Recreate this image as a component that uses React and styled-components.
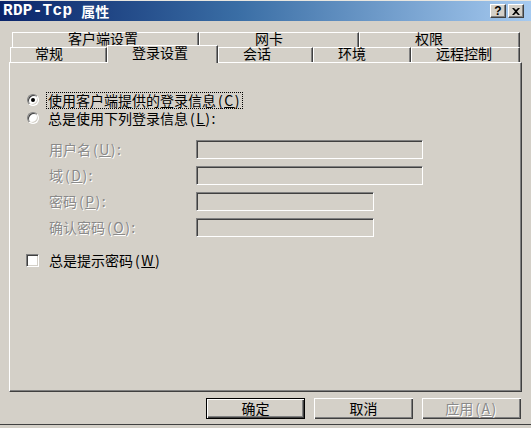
import React from 'react';
import styled, { createGlobalStyle } from 'styled-components';

const Global = createGlobalStyle`
  html, body { margin: 0; padding: 0; background: #d4d0c8; }
  body { font-family: "Noto Sans CJK SC", "Noto Sans", sans-serif; }
`;

const Window = styled.div`
  width: 531px;
  height: 425px;
  box-sizing: border-box;
  background: #d4d0c8;
  border-bottom: 1px solid #404040;
  display: flex;
  flex-direction: column;
  font-family: "Noto Sans CJK SC", "Noto Sans", sans-serif;
  font-size: 14px;
  color: #000;
`;

const TitleBar = styled.div`
  height: 20px;
  border-top: 1px solid #e8e6e0;
  background: linear-gradient(to right, #0a246a 0%, #3a6ea5 45%, #a6caf0 100%);
  display: flex;
  align-items: center;
  justify-content: space-between;
  padding: 0 7px 0 3px;
`;

const Title = styled.div`
  color: #fff;
  font-weight: bold;
  display: flex;
  align-items: center;
  gap: 9px;
`;

const TitleLatin = styled.span`
  font-family: "Liberation Mono", monospace;
  font-size: 16px;
  letter-spacing: 0.3px;
`;

const TitleCjk = styled.span`
  font-family: "Noto Sans CJK SC", sans-serif;
  font-size: 14px;
`;

const CaptionButtons = styled.div`
  display: flex;
  gap: 2px;
`;

const CaptionButton = styled.div`
  width: 16px;
  height: 14px;
  box-sizing: border-box;
  background: #d4d0c8;
  border: 1px solid;
  border-color: #fff #404040 #404040 #fff;
  box-shadow: inset -1px -1px 0 #808080;
  display: flex;
  align-items: center;
  justify-content: center;
  font-family: "Liberation Sans", sans-serif;
  font-weight: bold;
  font-size: 12px;
  line-height: 12px;
  color: #000;
`;

const Body = styled.div`
  flex: 1;
  display: flex;
  flex-direction: column;
  padding: 11px 9px 0 9px;
`;

const TabRow = styled.div`
  display: flex;
  height: 15px;
  margin-left: ${p => p.$indent}px;
  position: relative;
  z-index: 1;
`;

const Tab = styled.div`
  width: ${p => p.$w}px;
  height: ${p => (p.$active ? 18 : 15)}px;
  margin-top: ${p => (p.$active ? -2 : 0)}px;
  box-sizing: border-box;
  background: #d4d0c8;
  border-top: 1px solid #fff;
  border-left: 1px solid #fff;
  border-right: 1px solid #404040;
  box-shadow: inset -1px 0 0 #808080;
  display: flex;
  align-items: center;
  padding-left: ${p => p.$pad}px;
  padding-bottom: ${p => (p.$active ? 5 : 4)}px;
  font-size: 14px;
  line-height: 13px;
  white-space: nowrap;
`;

const Panel = styled.div`
  width: 513px;
  height: 330px;
  box-sizing: border-box;
  border: 1px solid;
  border-color: #fff #404040 #404040 #fff;
  box-shadow: inset -1px -1px 0 #808080;
  padding: 28px 0 0 16px;
  display: flex;
  flex-direction: column;
`;

const OptionRow = styled.label`
  display: flex;
  align-items: center;
  height: 18px;
  padding-left: ${p => p.$indent || 0}px;
  gap: ${p => p.$gap}px;
`;

const Radio = styled.span`
  width: 12px;
  height: 12px;
  box-sizing: border-box;
  border-radius: 50%;
  border: 1px solid;
  border-color: #808080 #fff #fff #808080;
  box-shadow: inset 1px 1px 0 #404040, inset -1px -1px 0 #d4d0c8;
  background: #fff;
  display: flex;
  align-items: center;
  justify-content: center;
  flex: none;
  &::after {
    content: "";
    width: 4px;
    height: 4px;
    border-radius: 50%;
    background: ${p => (p.$checked ? '#000' : 'transparent')};
  }
`;

const Check = styled.span`
  width: 13px;
  height: 13px;
  box-sizing: border-box;
  border: 1px solid;
  border-color: #808080 #fff #fff #808080;
  box-shadow: inset 1px 1px 0 #404040, inset -1px -1px 0 #d4d0c8;
  background: #fff;
  flex: none;
`;

const OptionText = styled.span`
  line-height: 14px;
  padding: 0 1px 1px;
  border: 1px ${p => (p.$focus ? 'dotted #000' : 'solid transparent')};
  white-space: nowrap;
`;

const Mn = styled.span`
  letter-spacing: 1.5px;
  margin-left: 2px;
`;

const U = styled.span`
  text-decoration: underline;
`;

const Fields = styled.div`
  display: grid;
  grid-template-columns: 147px auto;
  row-gap: 7px;
  margin: 13px 0 14px 23px;
  align-items: center;
`;

const FieldLabel = styled.span`
  color: #8a8a8a;
  text-shadow: 1px 1px 0 #fff;
  line-height: 14px;
  padding-bottom: 2px;
  white-space: nowrap;
`;

const Input = styled.div`
  width: ${p => p.$w}px;
  height: 19px;
  box-sizing: border-box;
  border: 1px solid;
  border-color: #808080 #fff #fff #808080;
  box-shadow: inset 1px 1px 0 #404040, inset -1px -1px 0 #d4d0c8;
  background: #d4d0c8;
`;

const ButtonBar = styled.div`
  display: flex;
  justify-content: flex-end;
  gap: 9px;
  margin-top: 6px;
  padding-right: 1px;
`;

const Button = styled.div`
  width: 99px;
  height: 21px;
  box-sizing: border-box;
  border: ${p => (p.$default ? '1px solid #000' : 'none')};
  box-shadow: inset 1px 1px 0 #fff, inset -1px -1px 0 #404040, inset -2px -2px 0 #808080;
  display: flex;
  align-items: center;
  justify-content: center;
  padding-bottom: 2px;
  color: ${p => (p.$disabled ? '#8a8a8a' : '#000')};
  text-shadow: ${p => (p.$disabled ? '1px 1px 0 #fff' : 'none')};
  line-height: 14px;
`;

const backTabs = [
  { label: '客户端设置', w: 187 },
  { label: '网卡', w: 160 },
  { label: '权限', w: 161 },
];

const frontTabs = [
  { label: '常规', w: 97 },
  { label: '登录设置', w: 111, active: true },
  { label: '会话', w: 95 },
  { label: '环境', w: 98 },
  { label: '远程控制', w: 109 },
];

const fields = [
  { label: '用户名', key: 'U', w: 227 },
  { label: '域', key: 'D', w: 227 },
  { label: '密码', key: 'P', w: 178 },
  { label: '确认密码', key: 'O', w: 178 },
];

export default function App() {
  return (
    <>
      <Global />
      <Window>
        <TitleBar>
          <Title>
            <TitleLatin>RDP-Tcp</TitleLatin>
            <TitleCjk>属性</TitleCjk>
          </Title>
          <CaptionButtons>
            <CaptionButton>?</CaptionButton>
            <CaptionButton>
              <svg width="8" height="7" viewBox="0 0 8 7">
                <path d="M0 0h2l2 2 2-2h2L5 3.5 8 7H6L4 5 2 7H0l3-3.5z" fill="#000" />
              </svg>
            </CaptionButton>
          </CaptionButtons>
        </TitleBar>
        <Body>
          <TabRow $indent={3}>
            {backTabs.map(t => (
              <Tab key={t.label} $w={t.w} $pad={55}>{t.label}</Tab>
            ))}
          </TabRow>
          <TabRow $indent={1}>
            {frontTabs.map(t => (
              <Tab key={t.label} $w={t.w} $pad={24} $active={t.active}>
                {t.label}
              </Tab>
            ))}
          </TabRow>
          <Panel>
            <OptionRow $indent={1} $gap={7}>
              <Radio $checked />
              <OptionText $focus>
                使用客户端提供的登录信息<Mn>(<U>C</U>)</Mn>
              </OptionText>
            </OptionRow>
            <OptionRow $indent={1} $gap={7}>
              <Radio />
              <OptionText>
                总是使用下列登录信息<Mn>(<U>L</U>):</Mn>
              </OptionText>
            </OptionRow>
            <Fields>
              {fields.map(f => (
                <React.Fragment key={f.key}>
                  <FieldLabel>
                    {f.label}<Mn>(<U>{f.key}</U>):</Mn>
                  </FieldLabel>
                  <Input $w={f.w} />
                </React.Fragment>
              ))}
            </Fields>
            <OptionRow $gap={8}>
              <Check />
              <OptionText>
                总是提示密码<Mn>(<U>W</U>)</Mn>
              </OptionText>
            </OptionRow>
          </Panel>
          <ButtonBar>
            <Button $default>确定</Button>
            <Button>取消</Button>
            <Button $disabled>
              应用<Mn>(<U>A</U>)</Mn>
            </Button>
          </ButtonBar>
        </Body>
      </Window>
    </>
  );
}
